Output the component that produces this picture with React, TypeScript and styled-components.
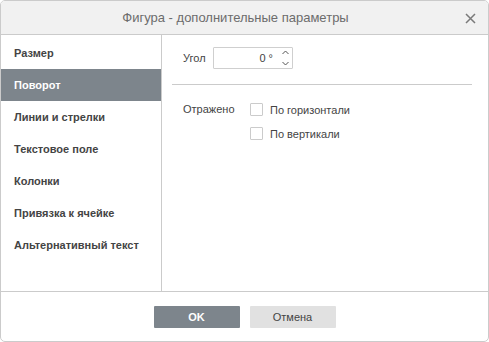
import styled, { createGlobalStyle } from "styled-components";

const GlobalStyle = createGlobalStyle`
  html, body {
    margin: 0;
    padding: 0;
    background: #ffffff;
  }
  body {
    font-family: Arial, "Liberation Sans", Helvetica, sans-serif;
  }
`;

export const StyledDialog = styled.div`
  box-sizing: border-box;
  width: 489px;
  height: 342px;
  border: 1px solid #cbcbcb;
  border-radius: 5px;
  overflow: hidden;
  display: flex;
  flex-direction: column;
  background: #ffffff;
  color: #444444;
  font-size: 11px;
`;

export const StyledHeader = styled.div`
  position: relative;
  box-sizing: border-box;
  height: 34px;
  flex: 0 0 34px;
  padding-right: 18px;
  background: #f1f1f1;
  border-bottom: 1px solid #cbcbcb;
  display: flex;
  align-items: center;
  justify-content: center;
  font-size: 13px;
  color: #6c6c6c;
`;

export const StyledClose = styled.div`
  position: absolute;
  right: 12px;
  top: 11px;
  width: 11px;
  height: 11px;
  cursor: pointer;
`;

export const StyledBody = styled.div`
  flex: 0 0 256px;
  display: flex;
  border-bottom: 1px solid #cbcbcb;
`;

export const StyledSidebar = styled.div`
  flex: 0 0 160px;
  border-right: 1px solid #cbcbcb;
  padding-top: 2px;
  display: flex;
  flex-direction: column;
`;

export const StyledMenuItem = styled.div<{ $selected?: boolean }>`
  height: 32px;
  line-height: 32px;
  padding-left: 13px;
  font-weight: bold;
  font-size: 11px;
  color: ${(p) => (p.$selected ? "#ffffff" : "#444444")};
  background: ${(p) => (p.$selected ? "#7d858c" : "transparent")};
  cursor: pointer;
`;

export const StyledPanel = styled.div`
  flex: auto;
  display: flex;
  flex-direction: column;
  padding: 12px 16px 0 10px;
`;

export const StyledRow = styled.div<{ $top?: boolean }>`
  display: flex;
  align-items: ${(p) => (p.$top ? "flex-start" : "center")};
  padding-left: 11px;
`;

export const StyledLabel = styled.div<{ $width: number }>`
  width: ${(p) => p.$width}px;
  flex: 0 0 auto;
`;

export const StyledSpinner = styled.div`
  box-sizing: border-box;
  width: 80px;
  height: 22px;
  border: 1px solid #cfcfcf;
  border-radius: 1px;
  display: flex;
  align-items: center;
  justify-content: flex-end;
  padding-right: 3px;
  font-size: 11px;
  color: #444444;
`;

export const StyledArrows = styled.div`
  display: flex;
  flex-direction: column;
  justify-content: space-between;
  height: 16px;
  margin-left: 9px;
`;

export const StyledDivider = styled.div`
  height: 1px;
  background: #cbcbcb;
  margin: 15px 0 18px;
`;

export const StyledCheckList = styled.div`
  display: flex;
  flex-direction: column;
  gap: 11px;
`;

export const StyledCheck = styled.label`
  display: flex;
  align-items: center;
  gap: 7px;
  height: 13px;
`;

export const StyledBox = styled.span`
  box-sizing: border-box;
  width: 13px;
  height: 13px;
  border: 1px solid #cbcbcb;
  border-radius: 1px;
  background: #ffffff;
`;

export const StyledFooter = styled.div`
  flex: auto;
  display: flex;
  justify-content: center;
  gap: 10px;
  padding-top: 14px;
`;

export const StyledButton = styled.button<{ $primary?: boolean }>`
  width: 86px;
  height: 22px;
  border: none;
  border-radius: 1px;
  font-family: Arial, "Liberation Sans", sans-serif;
  font-size: 11px;
  font-weight: ${(p) => (p.$primary ? "bold" : "normal")};
  color: ${(p) => (p.$primary ? "#ffffff" : "#444444")};
  background: ${(p) => (p.$primary ? "#7d858c" : "#e1e1e1")};
  cursor: pointer;
`;

const Chevron = ({ up }: { up?: boolean }) => (
  <svg width="7" height="5" viewBox="0 0 7 5">
    <path
      d={up ? "M0.5 4 L3.5 1 L6.5 4" : "M0.5 1 L3.5 4 L6.5 1"}
      fill="none"
      stroke="#555"
      strokeWidth="1"
    />
  </svg>
);

const menu = [
  "Размер",
  "Поворот",
  "Линии и стрелки",
  "Текстовое поле",
  "Колонки",
  "Привязка к ячейке",
  "Альтернативный текст",
];

export default function App() {
  return (
    <>
      <GlobalStyle />
      <StyledDialog>
        <StyledHeader>
          Фигура - дополнительные параметры
          <StyledClose>
            <svg width="11" height="11" viewBox="0 0 11 11">
              <path d="M1 1 L10 10 M10 1 L1 10" stroke="#7a7a7a" strokeWidth="1.5" />
            </svg>
          </StyledClose>
        </StyledHeader>
        <StyledBody>
          <StyledSidebar>
            {menu.map((item) => (
              <StyledMenuItem key={item} $selected={item === "Поворот"}>
                {item}
              </StyledMenuItem>
            ))}
          </StyledSidebar>
          <StyledPanel>
            <StyledRow>
              <StyledLabel $width={30}>Угол</StyledLabel>
              <StyledSpinner>
                0 °
                <StyledArrows>
                  <Chevron up />
                  <Chevron />
                </StyledArrows>
              </StyledSpinner>
            </StyledRow>
            <StyledDivider />
            <StyledRow $top>
              <StyledLabel $width={67}>Отражено</StyledLabel>
              <StyledCheckList>
                <StyledCheck>
                  <StyledBox />
                  По горизонтали
                </StyledCheck>
                <StyledCheck>
                  <StyledBox />
                  По вертикали
                </StyledCheck>
              </StyledCheckList>
            </StyledRow>
          </StyledPanel>
        </StyledBody>
        <StyledFooter>
          <StyledButton $primary>OK</StyledButton>
          <StyledButton>Отмена</StyledButton>
        </StyledFooter>
      </StyledDialog>
    </>
  );
}
